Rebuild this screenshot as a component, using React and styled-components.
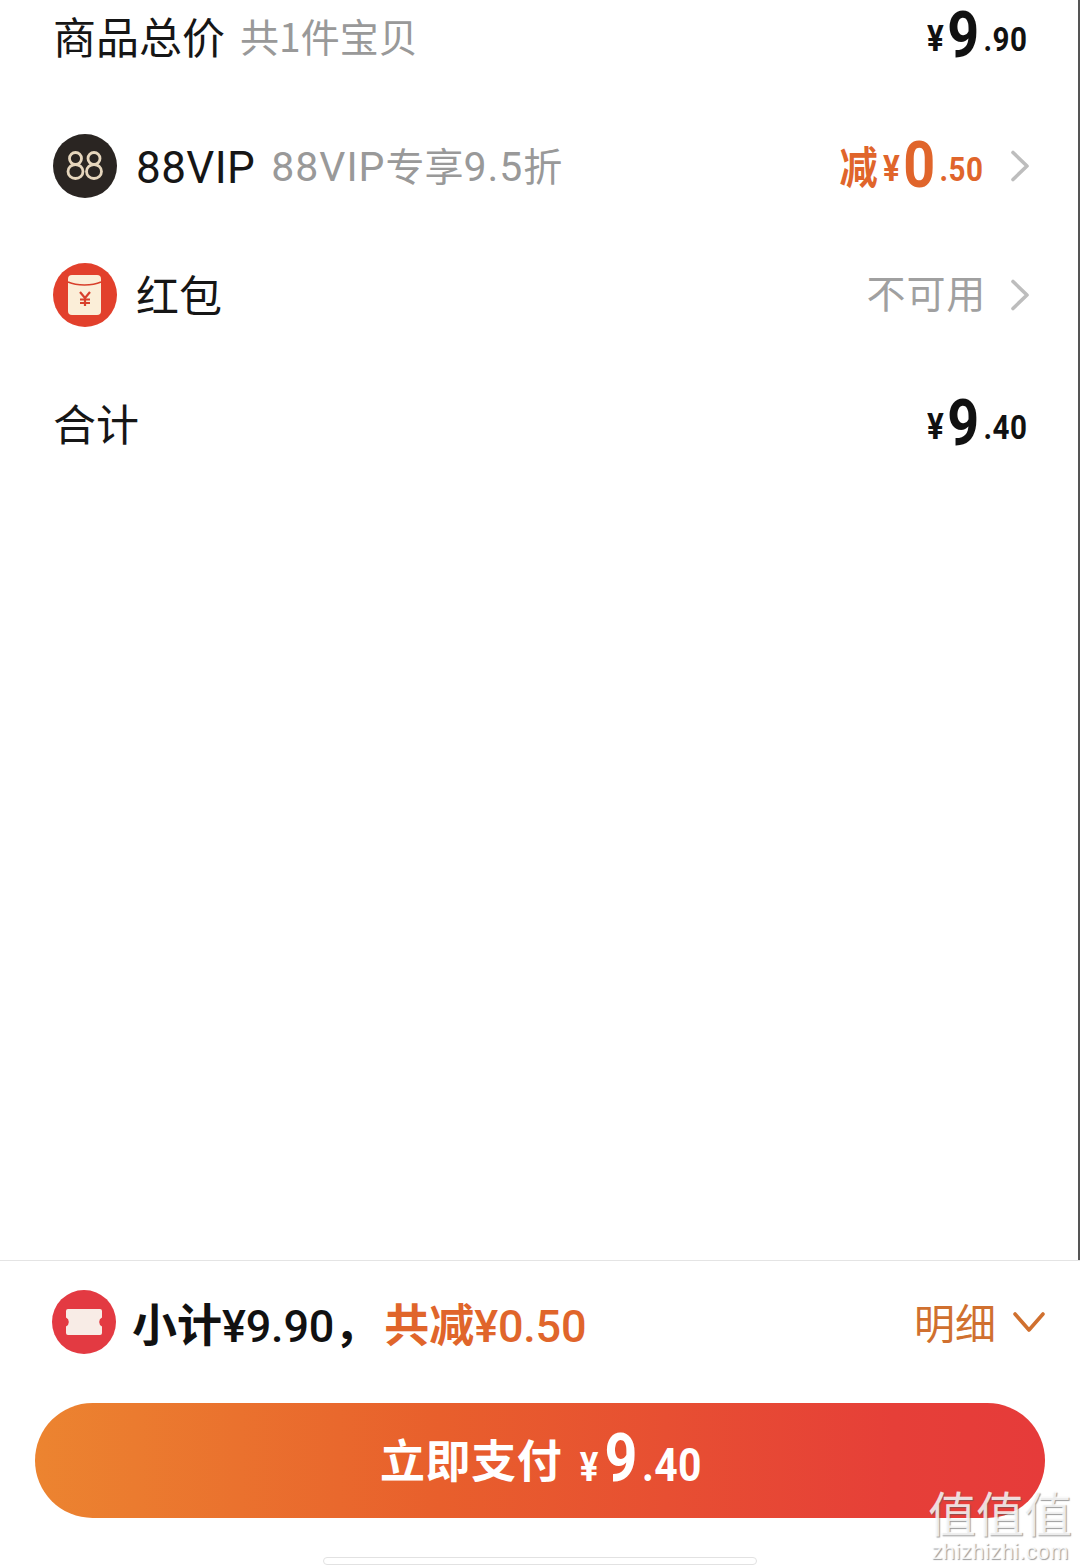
import React from "react";
import styled, { createGlobalStyle } from "styled-components";

const Global = createGlobalStyle`
  html, body { margin: 0; padding: 0; background: #fff; }
  #root { width: 1080px; height: 1568px; overflow: hidden; }
`;
const CJK = `"Noto Sans CJK SC", "Noto Sans", sans-serif`;
const NUM = `Roboto, "Noto Sans CJK SC", sans-serif`;
const ORANGE = "#e0652b";

const Page = styled.div`
  position: relative;
  width: 1080px;
  height: 1568px;
  display: flex;
  flex-direction: column;
  font-family: ${CJK};
  color: #111;
  background: #fff;
`;
const Main = styled.main`
  height: 1260px;
  box-sizing: border-box;
  padding: 0 50px 0 53px;
  border-right: 2px solid #555;
  display: flex;
  flex-direction: column;
  gap: 55.2px;
`;
const Row = styled.div`
  height: 74px;
  display: flex;
  align-items: center;
  justify-content: space-between;
`;
const Left = styled.div`
  display: flex;
  align-items: center;
  gap: ${(p) => p.$gap || 19}px;
`;
const Title = styled.span`
  font-size: 43px;
  line-height: 50px;
  font-weight: 400;
  color: #161616;
  margin-bottom: ${(p) => p.$lift ?? 5}px;
`;
const Note = styled.span`
  font-size: 39px;
  line-height: 50px;
  color: #999;
  font-weight: 400;
  margin-bottom: ${(p) => p.$lift ?? 5}px;
  margin-left: ${(p) => p.$pull || 0}px;
`;
const Latin = styled.span`
  font-family: Roboto, "Noto Sans CJK SC", sans-serif;
  font-size: ${(p) => p.$size || 42}px;
  letter-spacing: ${(p) => p.$spacing || 0}px;
`;
const Right = styled.div`
  display: flex;
  align-items: center;
  gap: ${(p) => p.$gap || 27}px;
  margin-right: -2px;
`;
const Muted = styled.span`
  font-size: 39px;
  line-height: 50px;
  color: #a0a0a0;
  letter-spacing: 0.8px;
  margin-bottom: 8px;
`;
const Price = styled.div`
  color: ${(p) => p.$color || "#111"};
  font-family: ${NUM};
  font-weight: 700;
  line-height: 60px;
  white-space: nowrap;
  margin-top: 14px;
  margin-right: ${(p) => p.$inset || 0}px;
  transform: scaleX(0.87);
  transform-origin: ${(p) => p.$origin || "right"} center;
`;
const Reduce = styled.span`
  font-family: ${CJK};
  font-size: 44px;
  font-weight: 700;
  vertical-align: 3px;
  margin-right: 5px;
`;
const Yen = styled.span`
  font-size: ${(p) => p.$size || 36}px;
  vertical-align: ${(p) => p.$raise ?? 6}px;
  margin: 0 ${(p) => p.$gap || 4}px 0 1px;
`;
const Big = styled.span`
  font-size: ${(p) => p.$size || 64}px;
  margin-right: 5px;
`;
const Small = styled.span`
  font-size: ${(p) => p.$size || 34}px;
  vertical-align: ${(p) => p.$raise ?? 6}px;
  letter-spacing: 0.5px;
`;
const Footer = styled.footer`
  flex: 1;
  border-top: 1px solid #e4e4e4;
  box-sizing: border-box;
  padding: 29px 35px 0;
  display: flex;
  flex-direction: column;
`;
const Summary = styled.div`
  height: 64px;
  display: flex;
  align-items: center;
  justify-content: space-between;
  padding: 0 0 0 17px;
`;
const SummaryText = styled.div`
  display: flex;
  align-items: center;
  gap: 16px;
`;
const SubTotal = styled.span`
  font-size: 45px;
  line-height: 64px;
  font-weight: 500;
  color: #111;
  font-family: ${NUM};
  letter-spacing: -0.2px;
  white-space: pre;
  margin-top: 6px;
`;
const Saved = styled.span`
  color: ${ORANGE};
  margin-left: 5px;
`;
const CJKBold = styled.span`
  font-family: ${CJK};
  font-weight: 700;
  letter-spacing: 0;
`;
const Detail = styled.div`
  display: flex;
  align-items: center;
  gap: 17px;
  color: #d0702f;
  font-size: 41px;
  line-height: 50px;
`;
const DetailText = styled.span`
  margin-bottom: 3px;
`;
const PayButton = styled.button`
  margin-top: 49px;
  height: 115px;
  width: 1010px;
  border: 0;
  border-radius: 58px;
  background: linear-gradient(90deg, #ec8430 0%, #e85f2c 40%, #e63f38 85%, #e63b3a 100%);
  color: #fff;
  display: flex;
  align-items: center;
  gap: 17px;
  padding: 0 0 0 345px;
  font-family: ${CJK};
`;
const PayLabel = styled.span`
  font-size: 45px;
  font-weight: 700;
  letter-spacing: 0.6px;
  margin-bottom: 4px;
`;
const HomeBar = styled.div`
  position: absolute;
  left: 323px;
  top: 1557px;
  width: 434px;
  height: 8px;
  box-sizing: border-box;
  border: 1.5px solid #e2e2e2;
  border-radius: 4px;
`;
const Mark = styled.div`
  position: absolute;
  right: 8px;
  bottom: 6px;
  width: 144px;
  text-align: center;
  color: rgba(255, 255, 255, 0.82);
  text-shadow: 1px 1px 1px rgba(90, 90, 90, 0.6);
`;
const MarkHan = styled.div`
  font-size: 48px;
  line-height: 48px;
  font-family: "Liberation Sans", ${CJK};
  font-weight: 400;
`;
const MarkUrl = styled.div`
  font-size: 22px;
  line-height: 20px;
  font-family: "Liberation Sans", sans-serif;
  letter-spacing: 0.4px;
  margin-top: 2px;
`;

const Chevron = () => (
  <svg width="20" height="32" viewBox="0 0 20 32" fill="none">
    <path d="M3 2.5 17 16 3 29.5" stroke="#bdbdbd" strokeWidth="3.6" strokeLinecap="round" strokeLinejoin="round" />
  </svg>
);
const ChevronDown = () => (
  <svg width="32" height="24" viewBox="0 0 32 24" fill="none">
    <path d="M2 4 16 20 30 4" stroke="#d0702f" strokeWidth="3.6" strokeLinecap="round" strokeLinejoin="round" />
  </svg>
);
const VipIcon = () => (
  <svg width="64" height="64" viewBox="0 0 64 64">
    <circle cx="32" cy="32" r="32" fill="#2a2522" />
    <g fill="none" stroke="#e6d6bd" strokeWidth="2.8">
      <ellipse cx="22.500" cy="24.500" rx="6" ry="6" />
      <ellipse cx="22.500" cy="37.500" rx="7.500" ry="7" />
      <ellipse cx="41" cy="24.500" rx="6" ry="6" />
      <ellipse cx="41" cy="37.500" rx="7.500" ry="7" />
    </g>
  </svg>
);
const PacketIcon = () => (
  <svg width="64" height="64" viewBox="0 0 64 64">
    <circle cx="32" cy="32" r="32" fill="#e2402c" />
    <rect x="15" y="12" width="33" height="40" rx="4" fill="#fbeed8" />
    <path d="M15 19c9 4 24 4 33 0" fill="none" stroke="#d8402c" strokeWidth="1.6" />
    <path d="M27 29l5 6 5-6M32 35v8M27 36.500h10M27 40h10" fill="none" stroke="#d8402c" strokeWidth="2.2" />
  </svg>
);
const TicketIcon = () => (
  <svg width="64" height="64" viewBox="0 0 64 64">
    <circle cx="32" cy="32" r="32" fill="#e33a42" />
    <path d="M14 21a2 2 0 0 1 2-2h32a2 2 0 0 1 2 2v6.500a5 5 0 0 0 0 9v6.500a2 2 0 0 1-2 2H16a2 2 0 0 1-2-2v-6.500a5 5 0 0 0 0-9z" fill="#f8ece6" />
  </svg>
);

const Amount = ({ big, small, inset }) => (
  <Price $inset={inset}>
    <Yen>¥</Yen>
    <Big>{big}</Big>
    <Small>.{small}</Small>
  </Price>
);

export default function App() {
  return (
    <Page>
      <Global />
      <Main>
        <Row>
          <Left $gap={15}>
            <Title>商品总价</Title>
            <Note>共1件宝贝</Note>
          </Left>
          <Amount big="9" small="90" inset={1} />
        </Row>
        <Row>
          <Left>
            <VipIcon />
            <Title $lift={1}><Latin $size={44} $spacing={0.4}>88VIP</Latin></Title>
            <Note $lift={1} $pull={-3}><Latin $size={41} $spacing={1}>88VIP</Latin>专享<Latin $size={41} $spacing={1}>9.5</Latin>折</Note>
          </Left>
          <Right>
            <Price $color={ORANGE}>
              <Reduce>减</Reduce>
              <Yen>¥</Yen>
              <Big>0</Big>
              <Small>.50</Small>
            </Price>
            <Chevron />
          </Right>
        </Row>
        <Row>
          <Left>
            <PacketIcon />
            <Title>红包</Title>
          </Left>
          <Right $gap={24}>
            <Muted>不可用</Muted>
            <Chevron />
          </Right>
        </Row>
        <Row>
          <Title>合计</Title>
          <Amount big="9" small="40" inset={1} />
        </Row>
      </Main>
      <Footer>
        <Summary>
          <SummaryText>
            <TicketIcon />
            <SubTotal>
              <CJKBold>小计</CJKBold>¥9.90<CJKBold>，</CJKBold>
              <Saved><CJKBold>共减</CJKBold>¥0.50</Saved>
            </SubTotal>
          </SummaryText>
          <Detail>
            <DetailText>明细</DetailText>
            <ChevronDown />
          </Detail>
        </Summary>
        <PayButton>
          <PayLabel>立即支付</PayLabel>
          <Price $color="#fff" $origin="left">
            <Yen $size={40} $raise={0} $gap={7}>¥</Yen>
            <Big $size={66}>9</Big>
            <Small $size={47} $raise={0}>.40</Small>
          </Price>
        </PayButton>
      </Footer>
      <HomeBar />
      <Mark>
        <MarkHan>值值值</MarkHan>
        <MarkUrl>zhizhizhi.com</MarkUrl>
      </Mark>
    </Page>
  );
}
